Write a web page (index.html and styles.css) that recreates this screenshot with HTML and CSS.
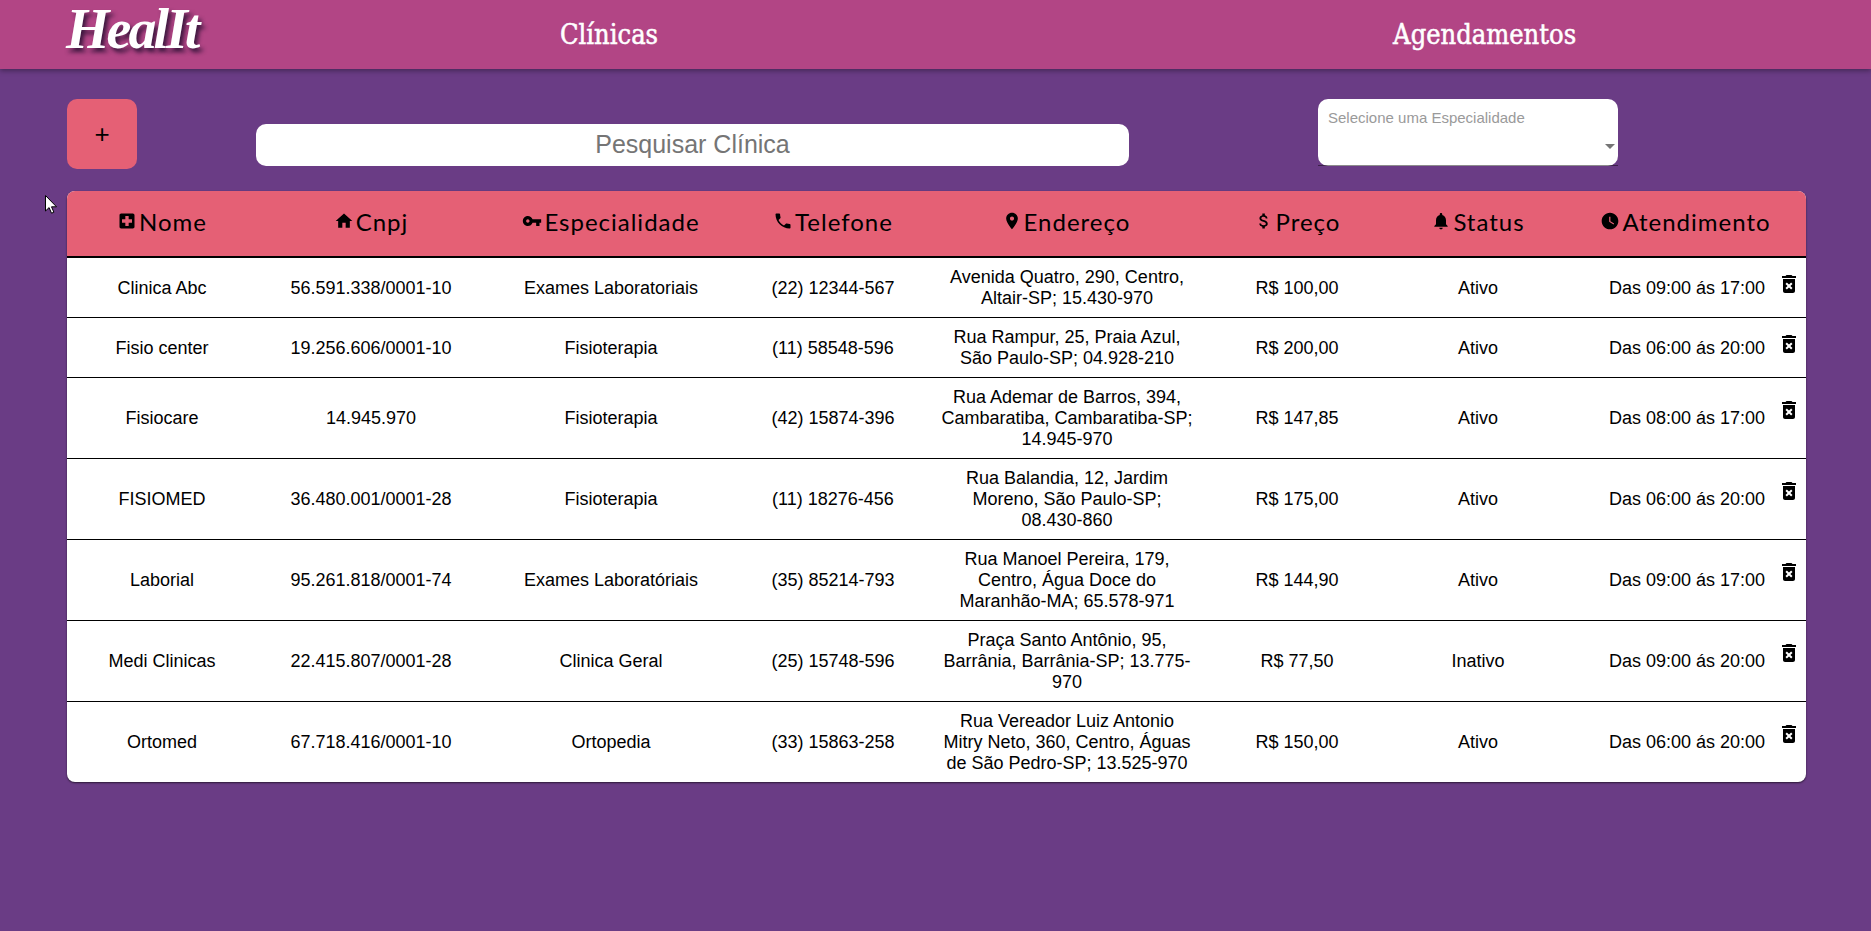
FILE: index.html
```html
<!DOCTYPE html>
<html lang="pt-BR">
<head>
<meta charset="utf-8">
<title>HealIt</title>
<link rel="stylesheet" href="styles.css">
</head>
<body>
<svg class="sprite" xmlns="http://www.w3.org/2000/svg">
  <symbol id="i-hospital" viewBox="0 0 24 24"><path d="M19 3H5c-1.1 0-1.99.9-1.99 2L3 19c0 1.1.9 2 2 2h14c1.1 0 2-.9 2-2V5c0-1.1-.9-2-2-2zm-1 11h-4v4h-4v-4H6v-4h4V6h4v4h4v4z"/></symbol>
  <symbol id="i-home" viewBox="0 0 24 24"><path d="M10 20v-6h4v6h5v-8h3L12 3 2 12h3v8z"/></symbol>
  <symbol id="i-key" viewBox="0 0 24 24"><path d="M12.65 10C11.83 7.67 9.61 6 7 6c-3.31 0-6 2.69-6 6s2.69 6 6 6c2.61 0 4.83-1.67 5.65-4H17v4h4v-4h2v-4H12.65zM7 14c-1.1 0-2-.9-2-2s.9-2 2-2 2 .9 2 2-.9 2-2 2z"/></symbol>
  <symbol id="i-phone" viewBox="0 0 24 24"><path d="M6.62 10.79c1.44 2.83 3.76 5.14 6.59 6.59l2.2-2.2c.27-.27.67-.36 1.02-.24 1.12.37 2.33.57 3.57.57.55 0 1 .45 1 1V20c0 .55-.45 1-1 1-9.39 0-17-7.61-17-17 0-.55.45-1 1-1h3.5c.55 0 1 .45 1 1 0 1.25.2 2.45.57 3.57.11.35.03.74-.25 1.02l-2.2 2.2z"/></symbol>
  <symbol id="i-place" viewBox="0 0 24 24"><path d="M12 2C8.13 2 5 5.13 5 9c0 5.25 7 13 7 13s7-7.75 7-13c0-3.87-3.13-7-7-7zm0 9.5c-1.38 0-2.5-1.12-2.5-2.5s1.12-2.5 2.5-2.5 2.5 1.12 2.5 2.5-1.12 2.5-2.5 2.5z"/></symbol>
  <symbol id="i-money" viewBox="0 0 24 24"><path d="M11.8 10.9c-2.27-.59-3-1.2-3-2.15 0-1.09 1.01-1.85 2.7-1.85 1.78 0 2.44.85 2.5 2.1h2.21c-.07-1.72-1.12-3.3-3.21-3.81V3h-3v2.16c-1.94.42-3.5 1.68-3.5 3.61 0 2.31 1.91 3.46 4.7 4.13 2.5.6 3 1.48 3 2.41 0 .69-.49 1.79-2.7 1.79-2.06 0-2.87-.92-2.98-2.1h-2.2c.12 2.19 1.76 3.42 3.68 3.83V21h3v-2.15c1.95-.37 3.5-1.5 3.5-3.55 0-2.84-2.43-3.81-4.7-4.4z"/></symbol>
  <symbol id="i-bell" viewBox="0 0 24 24"><path d="M12 22c1.1 0 2-.9 2-2h-4c0 1.1.89 2 2 2zm6-6v-5c0-3.07-1.64-5.64-4.5-6.32V4c0-.83-.67-1.5-1.5-1.5s-1.5.67-1.5 1.5v.68C7.63 5.36 6 7.92 6 11v5l-2 2v1h16v-1l-2-2z"/></symbol>
  <symbol id="i-clock" viewBox="0 0 24 24"><path d="M12 2C6.5 2 2 6.5 2 12s4.5 10 10 10 10-4.5 10-10S17.5 2 12 2zm4.2 14.2L11 13V7h1.5v5.2l4.5 2.7-.8 1.3z"/></symbol>
  <symbol id="i-trash" viewBox="0 0 24 24"><path d="M6 19c0 1.1.9 2 2 2h8c1.1 0 2-.9 2-2V7H6v12zm2.46-7.12l1.41-1.41L12 12.59l2.12-2.12 1.41 1.41L13.41 14l2.12 2.12-1.41 1.41L12 15.41l-2.12 2.12-1.41-1.41L10.59 14l-2.13-2.12zM15.5 4l-1-1h-5l-1 1H5v2h14V4z"/></symbol>
</svg>

<header class="topbar">
  <a class="logo">HealIt</a>
  <a class="nav-link nav-clinicas">Clínicas</a>
  <a class="nav-link nav-agenda">Agendamentos</a>
</header>

<main class="content">
  <div class="toolbar">
    <button class="add-btn">+</button>
    <input class="search" type="text" placeholder="Pesquisar Clínica">
    <div class="select">
      <span class="select-label">Selecione uma Especialidade</span>
      <span class="select-arrow"></span>
    </div>
  </div>

  <div class="table-wrap">
    <table class="clinics">
      <colgroup>
        <col class="c-nome"><col class="c-cnpj"><col class="c-esp"><col class="c-tel"><col class="c-end"><col class="c-preco"><col class="c-status"><col class="c-atend">
      </colgroup>
      <thead>
        <tr>
          <th><svg class="th-icon"><use href="#i-hospital"/></svg>Nome</th>
          <th><svg class="th-icon"><use href="#i-home"/></svg>Cnpj</th>
          <th><svg class="th-icon"><use href="#i-key"/></svg>Especialidade</th>
          <th><svg class="th-icon"><use href="#i-phone"/></svg>Telefone</th>
          <th><svg class="th-icon"><use href="#i-place"/></svg>Endereço</th>
          <th><svg class="th-icon"><use href="#i-money"/></svg>Preço</th>
          <th><svg class="th-icon"><use href="#i-bell"/></svg>Status</th>
          <th><svg class="th-icon"><use href="#i-clock"/></svg>Atendimento</th>
        </tr>
      </thead>
      <tbody>
        <tr>
          <td>Clinica Abc</td><td>56.591.338/0001-10</td><td>Exames Laboratoriais</td><td>(22) 12344-567</td>
          <td class="cell-addr">Avenida Quatro, 290, Centro, Altair-SP; 15.430-970</td><td>R$ 100,00</td><td>Ativo</td>
          <td class="cell-last">Das 09:00 ás 17:00<svg class="trash"><use href="#i-trash"/></svg></td>
        </tr>
        <tr>
          <td>Fisio center</td><td>19.256.606/0001-10</td><td>Fisioterapia</td><td>(11) 58548-596</td>
          <td class="cell-addr">Rua Rampur, 25, Praia Azul, São Paulo-SP; 04.928-210</td><td>R$ 200,00</td><td>Ativo</td>
          <td class="cell-last">Das 06:00 ás 20:00<svg class="trash"><use href="#i-trash"/></svg></td>
        </tr>
        <tr>
          <td>Fisiocare</td><td>14.945.970</td><td>Fisioterapia</td><td>(42) 15874-396</td>
          <td class="cell-addr">Rua Ademar de Barros, 394, Cambaratiba, Cambaratiba-SP; 14.945-970</td><td>R$ 147,85</td><td>Ativo</td>
          <td class="cell-last">Das 08:00 ás 17:00<svg class="trash"><use href="#i-trash"/></svg></td>
        </tr>
        <tr>
          <td>FISIOMED</td><td>36.480.001/0001-28</td><td>Fisioterapia</td><td>(11) 18276-456</td>
          <td class="cell-addr">Rua Balandia, 12, Jardim Moreno, São Paulo-SP; <span class="nowrap">08.430-860</span></td><td>R$ 175,00</td><td>Ativo</td>
          <td class="cell-last">Das 06:00 ás 20:00<svg class="trash"><use href="#i-trash"/></svg></td>
        </tr>
        <tr>
          <td>Laborial</td><td>95.261.818/0001-74</td><td>Exames Laboratóriais</td><td>(35) 85214-793</td>
          <td class="cell-addr">Rua Manoel Pereira, 179, Centro, Água Doce do Maranhão-MA; 65.578-971</td><td>R$ 144,90</td><td>Ativo</td>
          <td class="cell-last">Das 09:00 ás 17:00<svg class="trash"><use href="#i-trash"/></svg></td>
        </tr>
        <tr>
          <td>Medi Clinicas</td><td>22.415.807/0001-28</td><td>Clinica Geral</td><td>(25) 15748-596</td>
          <td class="cell-addr">Praça Santo Antônio, 95, Barrânia, Barrânia-SP; 13.775-970</td><td>R$ 77,50</td><td>Inativo</td>
          <td class="cell-last">Das 09:00 ás 20:00<svg class="trash"><use href="#i-trash"/></svg></td>
        </tr>
        <tr>
          <td>Ortomed</td><td>67.718.416/0001-10</td><td>Ortopedia</td><td>(33) 15863-258</td>
          <td class="cell-addr">Rua Vereador Luiz Antonio Mitry Neto, 360, Centro, Águas de São Pedro-SP; 13.525-970</td><td>R$ 150,00</td><td>Ativo</td>
          <td class="cell-last">Das 06:00 ás 20:00<svg class="trash"><use href="#i-trash"/></svg></td>
        </tr>
      </tbody>
    </table>
  </div>
</main>

<svg class="cursor" viewBox="0 0 12 19" xmlns="http://www.w3.org/2000/svg"><path d="M.5.5v15.5l3.6-3.4 2.4 5.6 2.4-1-2.4-5.4h5z" fill="#fff" stroke="#000" stroke-width="1"/></svg>
</body>
</html>
```

FILE: styles.css
```css
* { box-sizing: border-box; }

html, body { height: 100%; }

body {
  margin: 0;
  background: #6a3c85;
  font-family: "Liberation Sans", Arial, sans-serif;
  color: #000;
  overflow: hidden;
}

.sprite { display: none; }

.topbar {
  display: flex;
  align-items: center;
  height: 69px;
  padding-left: 66px;
  background: #b24585;
  box-shadow: 0 2px 5px rgba(0, 0, 0, 0.35);
}

.logo {
  width: 134px;
  margin-top: -12px;
  color: #fff;
  font-family: "Liberation Serif", serif;
  font-style: italic;
  font-weight: 700;
  font-size: 56px;
  line-height: 56px;
  letter-spacing: -3px;
  text-shadow: 3px 4px 4px rgba(40, 15, 50, 0.85);
  white-space: nowrap;
}

.nav-link {
  color: #fff;
  font-family: "DejaVu Serif Condensed", "DejaVu Serif", serif;
  font-size: 27px;
  line-height: 28px;
  -webkit-text-stroke: 0.5px #fff;
}

.nav-clinicas { margin-left: 360px; }
.nav-agenda { margin-left: 735px; }

.content { padding: 30px 65px 0 67px; }

.toolbar {
  display: flex;
  align-items: flex-start;
  height: 70px;
}

.add-btn {
  width: 70px;
  height: 70px;
  border: 0;
  border-radius: 10px;
  background: #e56075;
  color: #000;
  font-family: "Liberation Sans", sans-serif;
  font-size: 26px;
  padding: 0;
}

.search {
  width: 873px;
  height: 42px;
  margin: 25px 0 0 119px;
  padding: 0 0 2px;
  border: 0;
  border-radius: 10px;
  background: #fff;
  font-family: "Liberation Sans", sans-serif;
  font-size: 25px;
  text-align: center;
  outline: 0;
}

.search::placeholder { color: #757575; opacity: 1; }

.select {
  position: relative;
  width: 300px;
  height: 67px;
  margin-left: 189px;
  border-radius: 10px;
  background: #fff;
}

.select::after {
  content: "";
  position: absolute;
  left: 0;
  right: 0;
  bottom: 0;
  height: 1px;
  background: rgba(0, 0, 0, 0.45);
}

.select-label {
  display: block;
  padding: 11px 0 0 10px;
  color: #9a9a9a;
  font-size: 15px;
  line-height: 16px;
}

.select-arrow {
  position: absolute;
  right: 3px;
  top: 45px;
  border-left: 5px solid transparent;
  border-right: 5px solid transparent;
  border-top: 5px solid #757575;
}

.table-wrap {
  margin-top: 22px;
  border-radius: 8px;
  overflow: hidden;
  background: #fff;
  box-shadow: 0 1px 2px rgba(0, 0, 0, 0.6);
}

.clinics {
  width: 100%;
  table-layout: fixed;
  border-collapse: collapse;
}

.c-nome { width: 190px; }
.c-cnpj { width: 228px; }
.c-esp { width: 252px; }
.c-tel { width: 192px; }
.c-end { width: 274px; }
.c-preco { width: 188px; }
.c-status { width: 174px; }
.c-atend { width: 241px; }

.clinics th {
  height: 66px;
  padding: 0 0 4px;
  background: #e56075;
  border-bottom: 2px solid #000;
  font-family: Lato, sans-serif;
  font-weight: 400;
  font-size: 24px;
  letter-spacing: 1px;
  white-space: nowrap;
}

.th-icon {
  width: 20px;
  height: 20px;
  margin-right: 2px;
  vertical-align: 0;
  fill: #000;
}

.clinics td {
  padding: 9px 10px 8px;
  border-bottom: 1px solid #000;
  font-size: 18px;
  line-height: 21px;
  text-align: center;
}

.clinics .cell-addr { padding-left: 11px; padding-right: 9px; }
.clinics .cell-last { padding-left: 13px; }

.nowrap { white-space: nowrap; }

.clinics tbody tr:last-child td { border-bottom: 0; }

.cell-last { position: relative; }

.trash {
  position: absolute;
  right: 5px;
  top: calc(28.6% - 3px);
  width: 24px;
  height: 24px;
  fill: #000;
}

.cursor {
  position: absolute;
  left: 45px;
  top: 195px;
  width: 12px;
  height: 19px;
}
```
